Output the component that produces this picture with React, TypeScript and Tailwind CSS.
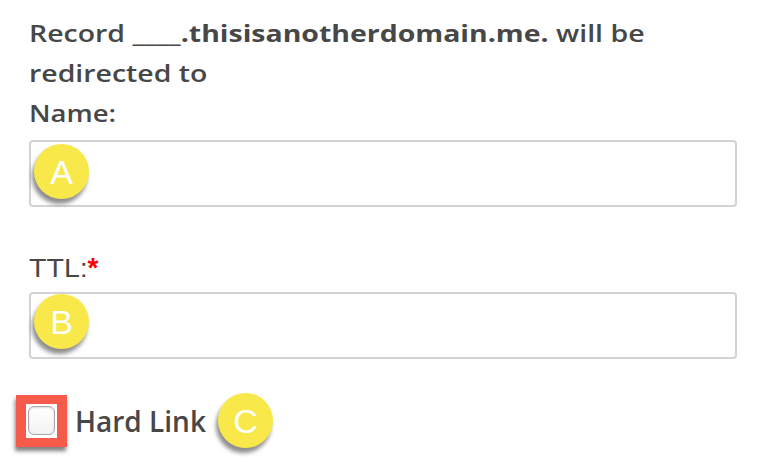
import React from "react";

function Badge({ letter, className = "" }: { letter: string; className?: string }) {
  return (
    <div
      className={`flex h-[55px] w-[55px] items-center justify-center rounded-full bg-[#f9e84a] text-[34px] leading-none text-white shadow-[-2px_5px_4px_rgba(0,0,0,0.45)] font-['Liberation_Sans',Arial,sans-serif] ${className}`}
    >
      {letter}
    </div>
  );
}

export default function App() {
  return (
    <div className="h-[476px] w-[766px] overflow-hidden bg-white font-['Open_Sans',sans-serif] text-[#474747]">
      <div className="pl-[29px] pr-[29px] pt-[13px]">
        <p className="origin-left scale-x-[1.21] whitespace-nowrap text-[23.5px] font-semibold leading-[40px]">
          Record ____<span className="font-bold">.thisisanotherdomain.me.</span> will be
          <br />
          redirected to
        </p>
        <p className="origin-left scale-x-[1.17] text-[23.5px] font-semibold leading-[40px]">Name:</p>
        <div className="relative mt-[7px] h-[67px] w-[708px] rounded-[4px] border-2 border-[#d2d2d7] bg-white">
          <Badge letter="A" className="absolute left-[3px] top-[2px]" />
        </div>

        <p className="mt-[46px] flex items-start font-['Liberation_Sans',Arial,sans-serif] text-[26px] leading-[30px]">
          <span className="inline-block origin-left scale-x-[1.1]">TTL:</span>
          <span className="ml-[5px] text-[28px] font-bold leading-[30px] text-[#ff0000]">*</span>
        </p>
        <div className="relative mt-[9px] h-[67px] w-[708px] rounded-[4px] border-2 border-[#d2d2d7] bg-white">
          <Badge letter="B" className="absolute left-[3px] top-[0px]" />
        </div>

        <div className="-ml-[13px] mt-[34px] flex items-center">
          <div className="flex h-[52px] w-[51px] items-center justify-center bg-[#f65a4b] shadow-[-1px_4px_4px_rgba(0,0,0,0.5)]">
            <div className="flex h-[34px] w-[31px] items-center justify-center bg-white">
              <div className="h-[29px] w-[27px] rounded-[6px] border border-[#a8a8a8] bg-gradient-to-b from-white to-[#f2f2f2] shadow-[inset_0_1px_2px_rgba(0,0,0,0.15)]" />
            </div>
          </div>
          <span className="ml-[8px] text-[28px] font-semibold leading-[40px]">Hard Link</span>
          <Badge letter="C" className="ml-[12px]" />
        </div>
      </div>
    </div>
  );
}
